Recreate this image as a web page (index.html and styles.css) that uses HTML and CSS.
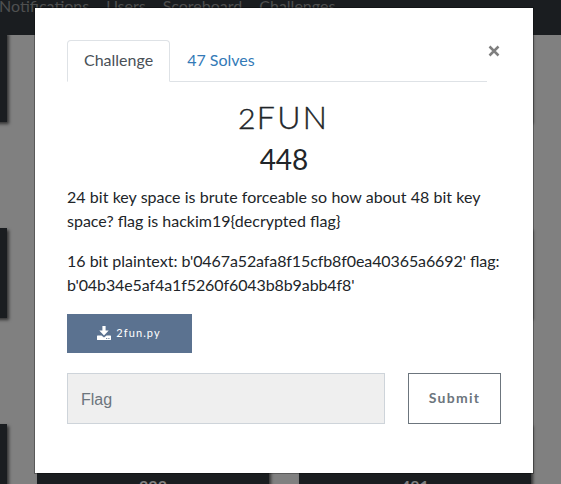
FILE: index.html
```html
<!DOCTYPE html>
<html lang="en">
<head>
<meta charset="utf-8">
<title>Challenges</title>
<link rel="stylesheet" href="styles.css">
</head>
<body>
<nav class="navbar"><a>Notifications</a><a>Users</a><a>Scoreboard</a><a>Challenges</a></nav>
<main class="board">
  <div class="card"></div><div class="card"></div><div class="card"></div>
  <div class="card"></div><div class="card"></div><div class="card"></div>
  <div class="card"></div><div class="card">333</div><div class="card">481</div>
</main>
<div class="modal">
  <header class="head">
    <div class="tabs"><a class="tab active">Challenge</a><a class="tab">47 Solves</a></div>
    <button class="close" aria-label="Close"><svg width="12" height="12" viewBox="0 0 12 12"><path d="M1.5 1.5 10.5 10.5M10.5 1.5 1.5 10.5"/></svg></button>
  </header>
  <h2 class="name"><span class="oldstyle">2</span>FUN</h2>
  <h3 class="value">448</h3>
  <p><span class="loose">24 bit key space is brute forceable so how about 48 bit key</span><br>space? flag is hackim19{decrypted flag}</p>
  <p>16 bit plaintext: <span class="hex">b'0467a52afa8f15cfb8f0ea40365a6692'</span> flag:<br><span class="hex">b'04b34e5af4a1f5260f6043b8b9abb4f8'</span></p>
  <a class="file"><svg width="14" height="14" viewBox="0 0 14 14"><path d="M5.4 0h3.2v4.6h3.1L7 9.4 2.3 4.6h3.1z"/><path fill-rule="evenodd" d="M.6 9.4h3.9L7 11.5l2.5-2.1h3.9q.6 0 .6.6v3.4q0 .6-.6.6H.6q-.6 0-.6-.6V10q0-.6.6-.6zM9.2 12v.9h1V12zm2.2 0v.9h1V12z"/></svg><span>2fun.py</span></a>
  <form class="answer"><input class="flag" placeholder="Flag"><button class="submit" type="button">Submit</button></form>
</div>
</body>
</html>
```
FILE: styles.css
```css
* { box-sizing: border-box; }
html, body { height: 100%; }
body {
  margin: 0;
  overflow: hidden;
  position: relative;
  background: #808080;
  color: #212529;
  font: 16px/24px Lato, sans-serif;
}
.navbar {
  position: relative;
  z-index: 1;
  display: flex;
  gap: 17px;
  height: 35px;
  margin-left: -1px;
  background: #1a1d20;
  color: #4f5050;
  line-height: 12px;
}
.board {
  display: grid;
  grid-template-columns: repeat(3, 232px);
  grid-auto-rows: 90px;
  gap: 106px 30px;
  margin: -3px 0 0 -225px;
  width: 756px;
}
.card {
  background: #1a1d20;
  color: #808080;
  box-shadow: 2px 2px 3px rgba(0, 0, 0, .6);
  padding-top: 50px;
  text-align: center;
  font-weight: 700;
}
.modal {
  position: absolute;
  z-index: 2;
  left: 34px;
  top: 7px;
  width: 500px;
  height: 467px;
  padding: 32px;
  border: 1px solid rgba(0, 0, 0, .3);
  background: #fff;
  background-clip: padding-box;
}
.head { display: flex; }
.tabs {
  display: flex;
  width: 420px;
  height: 42px;
  border-bottom: 1px solid #dee2e6;
}
.tab {
  height: 42px;
  padding: 7px 16px;
  border: 1px solid transparent;
  color: #337ab7;
}
.tab.active {
  border-color: #dee2e6 #dee2e6 #fff;
  border-radius: 4px 4px 0 0;
  background: #fff;
  color: #495057;
}
.close {
  display: flex;
  margin: 5px 0 0 1px;
  padding: 0;
  border: 0;
  background: none;
}
.close svg { stroke: #7f7f7f; stroke-width: 2.5; }
.name {
  height: 38px;
  margin: 16px 0 0;
  text-align: center;
  font-size: 32px;
  line-height: 38px;
  font-weight: 300;
  letter-spacing: 2.4px;
  -webkit-text-stroke: .4px #212529;
}
.oldstyle {
  display: inline-block;
  transform: scaleX(1.12);
  font-size: 27px;
}
.value {
  height: 34px;
  margin: 6px 0 9px;
  text-align: center;
  font-size: 28px;
  line-height: 34px;
  font-weight: 400;
}
p { margin: 0 0 16px; white-space: nowrap; }
.loose { word-spacing: .17px; }
.hex { letter-spacing: -.1px; font-variant-ligatures: common-ligatures; }
.file {
  display: flex;
  align-items: center;
  justify-content: center;
  gap: 5px;
  width: 125px;
  height: 39px;
  margin-top: 17px;
  padding-right: 1px;
  padding-bottom: 2px;
  background: #5b7290;
  color: #fff;
  font-size: 11px;
  letter-spacing: 1.1px;
}
.file svg { fill: #fff; }
.answer {
  display: flex;
  justify-content: space-between;
  margin-top: 20px;
}
.flag {
  width: 318px;
  height: 51px;
  padding: 2px 13px 0;
  border: 1px solid #ced4da;
  background: #efefef;
  font: 16px "Liberation Sans", sans-serif;
}
.flag::placeholder { color: #6c757d; opacity: 1; }
.submit {
  width: 93px;
  height: 51px;
  padding: 0 0 3px;
  border: 1px solid #6c757d;
  background: #fff;
  color: #6c757d;
  font: 700 14px Lato, sans-serif;
  letter-spacing: 1.3px;
}
```
